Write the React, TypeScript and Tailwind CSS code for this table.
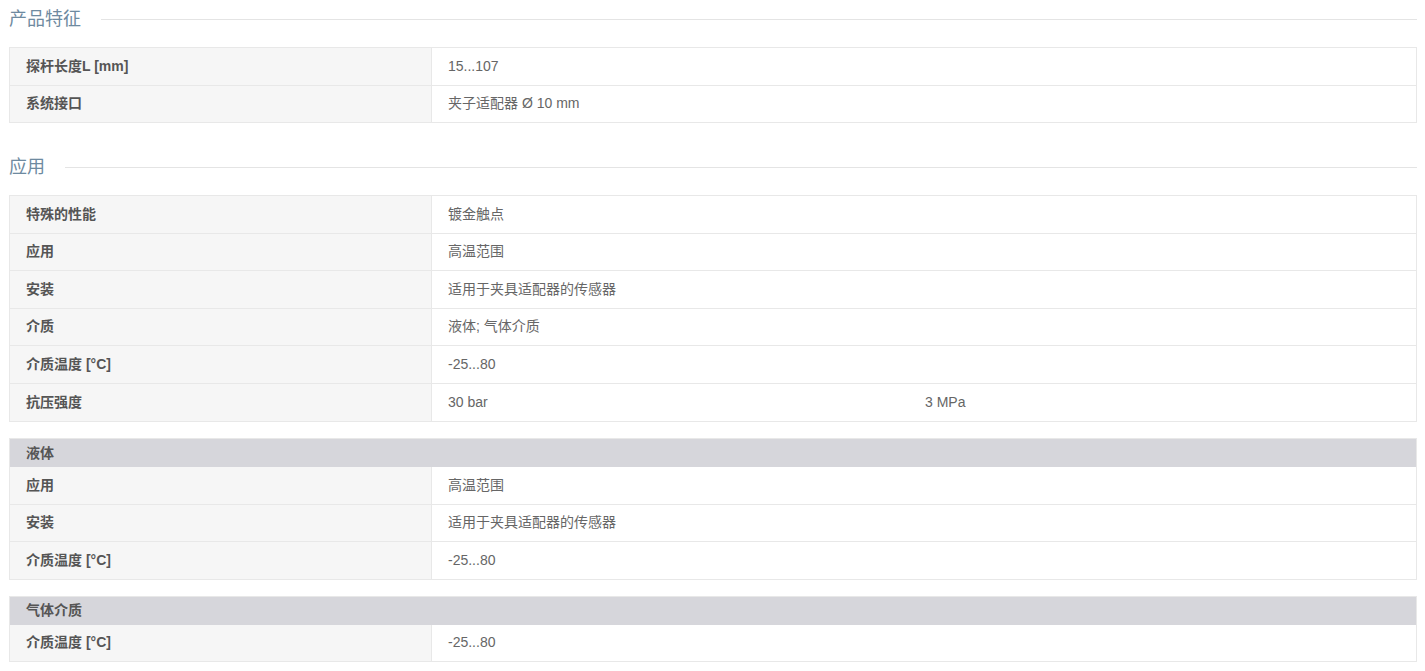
import React from "react"

type Row = { label: string; value: string; extra?: string; tall?: boolean }

const font = { fontFamily: '"Liberation Sans", Arial, "Noto Sans CJK SC", sans-serif' }

function SectionTitle({ title, first }: { title: string; first?: boolean }) {
  return (
    <div className={`flex items-center h-[28px] mb-[14px] ${first ? "mt-[5px]" : "mt-[30px]"}`}>
      <h2 className="text-[18px] leading-[28px] text-[#6e8aa0] font-normal pr-[20px] whitespace-nowrap">{title}</h2>
      <div className="flex-1 h-px bg-[#e4e4e4]" />
    </div>
  )
}

function SpecRow({ row }: { row: Row }) {
  return (
    <div className={`flex border-b border-[#e8e8e8] ${row.tall ? "h-[38.5px]" : "h-[37.5px]"}`}>
      <div className="w-[422px] shrink-0 bg-[#f6f6f6] border-r border-[#e8e8e8] flex items-center px-4 text-[14px] font-bold text-[#555]">
        {row.label}
      </div>
      <div className="flex-1 flex items-center text-[14px] text-[#666]">
        <div className={`px-4 ${row.extra ? "w-[477px]" : ""}`}>{row.value}</div>
        {row.extra && <div className="px-4">{row.extra}</div>}
      </div>
    </div>
  )
}

function SpecTable({ rows, header }: { rows: Row[]; header?: string }) {
  return (
    <div className="border border-b-0 border-[#e8e8e8]">
      {header && (
        <div className="h-[28px] bg-[#d6d6db] flex items-center px-4 text-[14px] font-bold text-[#555]">{header}</div>
      )}
      {rows.map((r, i) => (
        <SpecRow key={i} row={r} />
      ))}
    </div>
  )
}

export default function App() {
  return (
    <div className="bg-white w-[1425px] min-h-[671px] pl-[9px] pr-[8px]" style={font}>
      <SectionTitle title="产品特征" first />
      <SpecTable
        rows={[
          { label: "探杆长度L [mm]", value: "15...107" },
          { label: "系统接口", value: "夹子适配器 Ø 10 mm" },
        ]}
      />

      <SectionTitle title="应用" />
      <SpecTable
        rows={[
          { label: "特殊的性能", value: "镀金触点" },
          { label: "应用", value: "高温范围" },
          { label: "安装", value: "适用于夹具适配器的传感器" },
          { label: "介质", value: "液体; 气体介质" },
          { label: "介质温度 [°C]", value: "-25...80" },
          { label: "抗压强度", value: "30 bar", extra: "3 MPa", tall: true },
        ]}
      />

      <div className="mt-[16px]">
        <SpecTable
          header="液体"
          rows={[
            { label: "应用", value: "高温范围" },
            { label: "安装", value: "适用于夹具适配器的传感器" },
            { label: "介质温度 [°C]", value: "-25...80" },
          ]}
        />
      </div>

      <div className="mt-[16px]">
        <SpecTable header="气体介质" rows={[{ label: "介质温度 [°C]", value: "-25...80" }]} />
      </div>
    </div>
  )
}
